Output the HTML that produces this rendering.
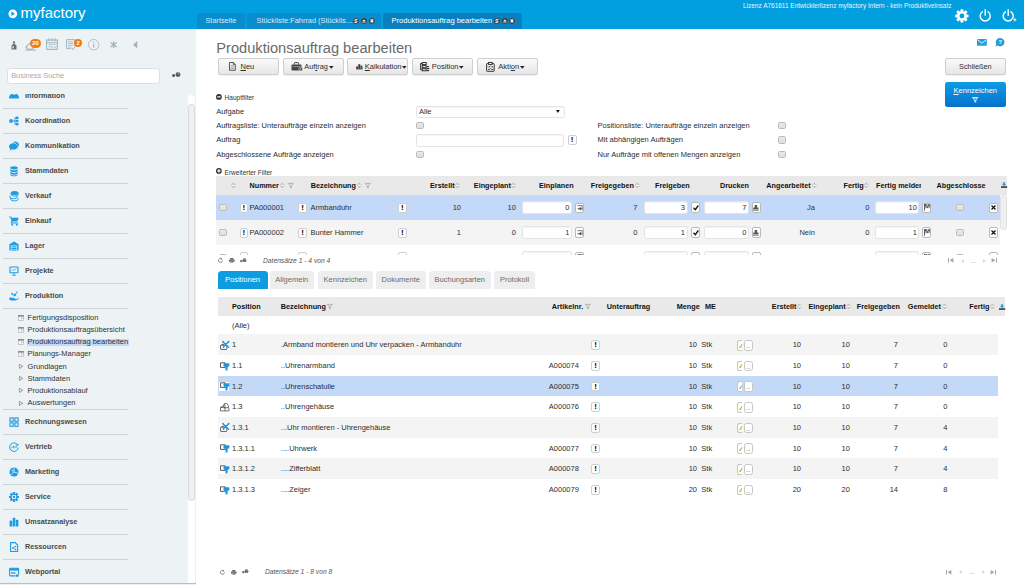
<!DOCTYPE html><html lang="de"><head><meta charset="utf-8"><title>myfactory - Produktionsauftrag bearbeiten</title><style>
*{box-sizing:border-box;margin:0;padding:0}
html,body{width:1024px;height:585px;overflow:hidden;background:#fff}
body{font-family:"Liberation Sans",Arial,sans-serif;font-size:7.5px;color:#2e2e2e;position:relative}
.t{position:absolute;white-space:nowrap;line-height:10px;height:10px}
.b{position:absolute}
.bd{font-weight:bold}
.h{font-weight:bold;font-size:7.25px;color:#111}
.it{font-style:italic;font-size:6.7px;color:#555}
svg{position:absolute;overflow:visible}
#hdr{position:absolute;left:0;top:0;width:1024px;height:29px;background:#019ee0}
#hline{position:absolute;left:196px;top:29px;width:828px;height:.6px;background:#a9dcf3}
#side{position:absolute;left:0;top:29px;width:196px;height:556px;background:#edf2f5}
.tab{position:absolute;top:13px;height:16px;background:#0b8ccd;border-radius:3px 3px 0 0}
.btn{position:absolute;border:1px solid #cfcfcf;border-radius:2px;background:linear-gradient(#fafafa,#e6e6e6);box-shadow:0 0.5px 0.5px rgba(0,0,0,.12)}
.inp{position:absolute;border:1px solid #e4e4e4;border-radius:2.5px;background:#fff;box-shadow:inset 0 0.5px 1px rgba(0,0,0,.08)}
.cb{position:absolute;width:7.3px;height:7.1px;margin-top:.3px;border:1px solid #bcbcbc;border-radius:1.6px;background:linear-gradient(#e9e9e9,#dfdfdf)}
.cbL{width:7.7px;height:7.6px;margin-top:0}
.sb{position:absolute;border:1px solid #b9b9b9;border-radius:2px;background:#fff}
.sep{position:absolute;left:3px;width:125px;height:1px;background:#ced3d6}
.mi{font-weight:bold;font-size:7.25px;color:#4a4a4a}
.sm{color:#333}
.tb2{position:absolute;top:271px;height:18px;border-radius:3.5px 3.5px 0 0;background:#eeeeee;color:#6c6c6c;text-align:center;line-height:18px;font-size:7.5px}
</style></head><body>
<div id="hdr"></div>
<svg style="left:8.2px;top:9.2px" width="9.6" height="9.6" viewBox="0 0 10 10"><circle cx="5" cy="5" r="4.6" fill="#fff"/><path d="M3.6 2.6 L7.2 5 L3.6 7.4Z" fill="#019ee0"/></svg>
<div class="t" style="left:20.5px;top:2px;font-size:15px;line-height:22px;height:22px;color:#fff">myfactory</div>
<div class="tab" style="left:196.5px;width:48.5px"></div>
<div class="tab" style="left:247px;width:134px"></div>
<div class="tab" style="left:383.3px;width:138.5px;background:#0a7fc0"></div>
<div class="t " style="top:16.20px;left:205.50px;color:#d6ecf8;font-size:7.3px">Startseite</div>
<div class="t " style="top:16.20px;left:256.50px;color:#d6ecf8;font-size:7.4px">Stückliste:Fahrrad (Stücklis...</div>
<div class="t " style="top:16.20px;left:391.60px;color:#fff;font-size:7.5px">Produktionsauftrag bearbeiten</div>
<svg style="left:353.10px;top:18.4px" width="5.8" height="5.8" viewBox="0 0 6 6"><circle cx="3" cy="3" r="3" fill="#3d4449"/><path d="M4.500 1.600H2.300a.8.800 0 0 0 0 1.500H3.700a.8.800 0 0 1 0 1.500H1.500" stroke="#fff" stroke-width="1" fill="none"/></svg><svg style="left:360.85px;top:18.4px" width="5.8" height="5.8" viewBox="0 0 6 6"><circle cx="3" cy="3" r="3" fill="#3d4449"/><path d="M1.300 3.300L3 1.500L4.700 3.300Z" fill="#fff"/><path d="M1.300 4.200h3.400" stroke="#fff" stroke-width=".8"/></svg><svg style="left:368.60px;top:18.4px" width="5.8" height="5.8" viewBox="0 0 6 6"><circle cx="3" cy="3" r="3" fill="#3d4449"/><path d="M1.700 1.500L4.300 4.500M4.300 1.500L1.700 4.500" stroke="#fff" stroke-width="1.300"/></svg>
<svg style="left:493.90px;top:18.4px" width="5.8" height="5.8" viewBox="0 0 6 6"><circle cx="3" cy="3" r="3" fill="#3d4449"/><path d="M4.500 1.600H2.300a.8.800 0 0 0 0 1.500H3.700a.8.800 0 0 1 0 1.500H1.500" stroke="#fff" stroke-width="1" fill="none"/></svg><svg style="left:501.65px;top:18.4px" width="5.8" height="5.8" viewBox="0 0 6 6"><circle cx="3" cy="3" r="3" fill="#3d4449"/><path d="M1.300 3.300L3 1.500L4.700 3.300Z" fill="#fff"/><path d="M1.300 4.200h3.400" stroke="#fff" stroke-width=".8"/></svg><svg style="left:509.40px;top:18.4px" width="5.8" height="5.8" viewBox="0 0 6 6"><circle cx="3" cy="3" r="3" fill="#3d4449"/><path d="M1.700 1.500L4.300 4.500M4.300 1.500L1.700 4.500" stroke="#fff" stroke-width="1.300"/></svg>
<div class="t " style="top:0.90px;left:743.00px;color:#eaf6fd;font-size:6.47px">Lizenz A761611 Entwicklerlizenz myfactory Intern - kein Produktiveinsatz</div>
<svg style="left:955.3px;top:8.6px" width="13.8" height="13.8" viewBox="-6.5 -6.5 13 13"><g fill="#fff"><circle r="4.4"/><rect x="-1.4" y="-6.3" width="2.8" height="3.4" rx=".5" transform="rotate(0)"/><rect x="-1.4" y="-6.3" width="2.8" height="3.4" rx=".5" transform="rotate(45)"/><rect x="-1.4" y="-6.3" width="2.8" height="3.4" rx=".5" transform="rotate(90)"/><rect x="-1.4" y="-6.3" width="2.8" height="3.4" rx=".5" transform="rotate(135)"/><rect x="-1.4" y="-6.3" width="2.8" height="3.4" rx=".5" transform="rotate(180)"/><rect x="-1.4" y="-6.3" width="2.8" height="3.4" rx=".5" transform="rotate(225)"/><rect x="-1.4" y="-6.3" width="2.8" height="3.4" rx=".5" transform="rotate(270)"/><rect x="-1.4" y="-6.3" width="2.8" height="3.4" rx=".5" transform="rotate(315)"/></g><circle r="2.3" fill="#019ee0"/></svg>
<svg style="left:979.3px;top:8.6px" width="12.4" height="12.8" viewBox="0 0 12 12.5"><path d="M3.3 2.7A4.9 4.9 0 1 0 8.7 2.7" fill="none" stroke="#fff" stroke-width="1.4" stroke-linecap="round"/><path d="M6 .8V6" stroke="#fff" stroke-width="1.4" stroke-linecap="round"/></svg>
<svg style="left:1002.2px;top:8.6px" width="15.5" height="13.4" viewBox="0 0 15 13"><path d="M3.3 2.7A4.9 4.9 0 1 0 8.7 2.7" fill="none" stroke="#fff" stroke-width="1.4" stroke-linecap="round"/><path d="M6 .8V6" stroke="#fff" stroke-width="1.4" stroke-linecap="round"/><path d="M12.4 8l.8 1.600 1.600.8-1.600.8-.8 1.600-.8-1.600-1.600-.8 1.600-.8z" fill="#fff" stroke="#019ee0" stroke-width=".5"/></svg>
<div id="side"></div>
<svg style="left:10.50px;top:40.50px" width="6" height="9" viewBox="0 0 6 9"><g fill="#666b6f"><circle cx="3" cy="1.300" r="1.150"/><path d="M1.600 2.800h2.800v1.400h1.100V8.600H.5V4.200h1.100z"/><rect x="1.500" y="5.200" width="1.300" height="2.200" fill="#edf2f5"/></g></svg>
<svg style="left:24.50px;top:40.50px" width="12" height="9.5" viewBox="0 0 12 9.5"><g fill="none" stroke="#9db5c1" stroke-width="1.100"><path d="M6.500.8L.9 6l2.400 2.400h3.200l3.200-3"/><path d="M.5 9h10.500"/></g></svg>
<div class="b" style="left:30.2px;top:38.6px;width:10.4px;height:9px;border-radius:4.5px;background:#f57c0a;color:#fff;font-weight:bold;font-size:5.8px;line-height:9px;text-align:center">20</div>
<svg style="left:45.60px;top:38.00px" width="12" height="12" viewBox="0 0 12 12"><g fill="none" stroke="#9db5c1" stroke-width="1.050"><rect x=".6" y="2" width="10.800" height="9.400"/><path d="M.6 4.800h10.800M3 .3v3M6 .3v3M9 .3v3"/><path d="M2.800 6.600h1.400M5.300 6.600h1.400M7.800 6.600h1.400M2.800 8.800h1.400M5.300 8.800h1.400" stroke-width="1.200"/><path d="M7.600 9.200l1 1 1.900-2.200" stroke-width=".8"/></g></svg>
<svg style="left:66.40px;top:38.60px" width="10" height="11.5" viewBox="0 0 10 11.5"><g fill="none" stroke="#9db5c1" stroke-width="1"><path d="M8.800 6.500V.6H.6v9h4.200"/><path d="M2.200 2.700h5M2.200 4.500h5M2.200 6.300h5M2.200 8h2.500" stroke-width=".8"/><path d="M5.400 8.600l1.500 2 2.400-3.200" stroke-width="1"/></g></svg>
<div class="b" style="left:74.3px;top:38.6px;width:7.7px;height:8.6px;border-radius:4.3px;background:#f57c0a;color:#fff;font-weight:bold;font-size:5.8px;line-height:8.6px;text-align:center">2</div>
<svg style="left:87.50px;top:39.00px" width="11.4" height="11.4" viewBox="0 0 11.4 11.4"><g fill="none" stroke="#9db5c1"><circle cx="5.700" cy="5.700" r="5.200" stroke-width=".8"/><path d="M5.700 4.800v3.600" stroke-width="1.100"/><circle cx="5.700" cy="3.100" r=".7" fill="#9db5c1" stroke="none"/></g></svg>
<svg style="left:109.50px;top:41.00px" width="7.4" height="7.6" viewBox="0 0 7.4 7.6"><g stroke="#9db5c1" stroke-width="1.300" fill="none"><path d="M3.700 .3v7M.7 1.600l6 4.400M6.700 1.600L.7 6"/></g></svg>
<svg style="left:132.70px;top:41.00px" width="4.3" height="7.6" viewBox="0 0 4.3 7.6"><path d="M4.300 0v7.600L0 3.800z" fill="#9db5c1"/></svg>
<div class="b" style="left:7.3px;top:68.3px;width:153.2px;height:15.3px;background:#fff;border:1px solid #dcdfe1;border-radius:3.5px"></div>
<div class="t " style="top:71.00px;left:11.20px;color:#a9a9a9;font-size:7.4px">Business Suche</div>
<svg style="left:171.70px;top:71.70px" width="8.5" height="5.5" viewBox="0 0 8.5 5.5"><circle cx="1.600" cy="3.600" r="1.500" fill="#555"/><circle cx="6" cy="2.600" r="2.400" fill="#555"/><circle cx="6.500" cy="2" r=".9" fill="#999"/></svg>
<div class="b" style="left:0;top:94.2px;width:186px;height:490.8px;overflow:hidden"><div style="position:absolute;left:0;top:-94.2px;width:186px;height:585px">
<svg style="left:9.00px;top:89.20px" width="10" height="10" viewBox="0 0 10 10"><g fill="#1f9be1"><circle cx="3" cy="2.6" r="1.7"/><circle cx="7.2" cy="2.6" r="1.7"/><path d="M0 9.5c0-3 1.5-4.5 3-4.5s2.2 1 2.2 1S6 5 7.2 5c1.7 0 2.8 1.500 2.800 4.500z"/></g></svg>
<div class="t mi" style="top:90.50px;left:25.00px;">Information</div>
<svg style="left:9.00px;top:115.50px" width="10" height="10" viewBox="0 0 10 10"><g fill="#1f9be1"><circle cx="2" cy="5" r="1.9"/><rect x="6.600" y=".6" width="2.800" height="2.400"/><rect x="6.600" y="3.800" width="2.800" height="2.400"/><rect x="6.600" y="7" width="2.800" height="2.400"/><path d="M3.500 4.600h2v-3h1.300v.8h-.5v2.200h.5v.8h-.5v2.200h.5v.8H5.500v-3h-2z"/></g></svg>
<div class="t mi" style="top:115.50px;left:25.00px;">Koordination</div>
<svg style="left:9.00px;top:140.50px" width="10" height="10" viewBox="0 0 10 10"><g fill="#1f9be1"><path d="M4.300 2.200c2.400 0 4.300 1.400 4.300 3.200s-1.900 3.200-4.300 3.200c-.6 0-1.100-.1-1.600-.2L.6 9.600l.7-1.900C.5 7.100 0 6.300 0 5.400c0-1.800 1.900-3.200 4.300-3.200z"/><path d="M5.700.6c2.400 0 4.300 1.400 4.300 3.200 0 .9-.5 1.700-1.300 2.300l.5 1.500-1-.6c.3-.5.500-1 .5-1.600 0-2.100-2.100-3.700-4.700-3.800.6-.6 1.100-1 1.700-1z"/></g></svg>
<div class="t mi" style="top:140.50px;left:25.00px;">Kommunikation</div>
<svg style="left:9.00px;top:165.50px" width="10" height="10" viewBox="0 0 10 10"><g fill="#1f9be1"><ellipse cx="5" cy="1.800" rx="3.800" ry="1.600"/><path d="M1.200 2.900c.5 1 2.100 1.400 3.800 1.400s3.300-.4 3.800-1.400v1.600c0 .9-1.700 1.600-3.800 1.600S1.200 5.400 1.200 4.500z"/><path d="M1.200 5.500c.5 1 2.100 1.400 3.800 1.400s3.300-.4 3.800-1.400v1.600c0 .9-1.700 1.600-3.800 1.600S1.200 8 1.200 7.100z"/><path d="M1.200 8.100c.5 1 2.100 1.400 3.800 1.400s3.300-.4 3.800-1.400v.6c0 .9-1.700 1.500-3.800 1.500s-3.800-.6-3.800-1.500z"/></g></svg>
<div class="t mi" style="top:165.50px;left:25.00px;">Stammdaten</div>
<svg style="left:9.00px;top:190.50px" width="10" height="10" viewBox="0 0 10 10"><g fill="none" stroke="#1f9be1" stroke-width="1"><ellipse cx="5.600" cy="2" rx="3.600" ry="1.500" fill="#1f9be1"/><path d="M2 2.200v1.300c0 .8 1.600 1.500 3.600 1.500s3.600-.7 3.600-1.500V2.200"/><path d="M.9 4.800v1.300c0 .8 1.600 1.500 3.600 1.500s3.600-.7 3.600-1.500V4.800"/><path d="M1.800 7.200v1.200c0 .8 1.600 1.500 3.600 1.500S9 9.200 9 8.400V7.200"/></g></svg>
<div class="t mi" style="top:190.50px;left:25.00px;">Verkauf</div>
<svg style="left:9.00px;top:215.50px" width="10" height="10" viewBox="0 0 10 10"><g fill="#1f9be1"><path d="M.3.600h1.800l.5 1.100h7.100l-1.500 3.900H3.600l-.5.900h6v1H2.500c-.7 0-1-.6-.7-1.100l.8-1.400L1.400 1.600H.3z"/><circle cx="3.200" cy="8.800" r="1"/><circle cx="7.800" cy="8.800" r="1"/></g></svg>
<div class="t mi" style="top:215.50px;left:25.00px;">Einkauf</div>
<svg style="left:9.00px;top:240.50px" width="10" height="10" viewBox="0 0 10 10"><g fill="#1f9be1"><path d="M5 .6L.4 3.200V9.600h1.400V4.600h6.400v5h1.400V3.200z"/><rect x="2.400" y="5.300" width="5.200" height="1.100"/><rect x="2.400" y="6.900" width="5.200" height="1.100"/><rect x="2.400" y="8.500" width="5.200" height="1.100"/></g></svg>
<div class="t mi" style="top:240.50px;left:25.00px;">Lager</div>
<svg style="left:9.00px;top:265.50px" width="10" height="10" viewBox="0 0 10 10"><g fill="none" stroke="#1f9be1"><rect x="1" y="1" width="8" height="5.800" rx=".6" stroke-width="1.100"/><path d="M2.600 5l1.600-1.600 1.200 1L7.400 2.500" stroke-width=".7"/><path d="M5 6.800v1.800M3.200 9.200h3.600" stroke-width="1"/></g></svg>
<div class="t mi" style="top:265.50px;left:25.00px;">Projekte</div>
<svg style="left:9.00px;top:290.50px" width="10" height="10" viewBox="0 0 10 10"><g fill="#1f9be1"><path d="M.4 6.500h1.800l2.200.5c.9.100 1.700.3 1.700.9h1.600l1.600-.7c.5-.2.800.3.400.7L6.500 9.600H2.300L.4 8.800z"/><path d="M4.600 5.600c0-2 .3-3 2.800-3.400.1 1.800-.8 2.900-2.200 3z"/><path d="M4.600 4.300C4.600 2.800 4 2 2.300 1.700c-.1 1.300.6 2.300 1.700 2.500z"/><circle cx="7.800" cy="1.300" r=".8"/></g></svg>
<div class="t mi" style="top:290.50px;left:25.00px;">Produktion</div>
<svg style="left:9.00px;top:417.10px" width="10" height="10" viewBox="0 0 10 10"><g fill="none" stroke="#1f9be1" stroke-width="1.100"><rect x="1" y=".9" width="3.200" height="3.400"/><rect x="5.900" y=".9" width="3.200" height="3.400"/><rect x="1" y="5.900" width="3.200" height="3.400"/><rect x="5.900" y="5.900" width="3.200" height="3.400"/></g></svg>
<div class="t mi" style="top:417.10px;left:25.00px;">Rechnungswesen</div>
<svg style="left:9.00px;top:442.10px" width="10" height="10" viewBox="0 0 10 10"><g fill="none" stroke="#1f9be1"><path d="M8.900 3.300A4.300 4.300 0 1 0 9.300 5.600" stroke-width="1"/><path d="M3 6.200V4.800M4.400 6.200V3.600M5.800 6.200V4.400M7.200 6.200V3" stroke-width=".8"/><path d="M9.600 1.600l-.5 2.200-2-.8z" fill="#1f9be1" stroke="none"/></g></svg>
<div class="t mi" style="top:442.10px;left:25.00px;">Vertrieb</div>
<svg style="left:9.00px;top:467.10px" width="10" height="10" viewBox="0 0 10 10"><g><circle cx="5" cy="5" r="4.500" fill="#1f9be1"/><path d="M5 5V.5M5 5l4.300 1.400M5 5L1.600 8" stroke="#edf2f5" stroke-width=".8" fill="none"/><circle cx="3.400" cy="3.600" r="1.100" fill="#edf2f5" opacity=".6"/></g></svg>
<div class="t mi" style="top:467.10px;left:25.00px;">Marketing</div>
<svg style="left:9.00px;top:492.00px" width="10" height="10" viewBox="0 0 10 10"><g fill="#1f9be1"><rect x="-1.100" y="-5" width="2.200" height="2.600" rx=".4" transform="translate(5 5) rotate(0)"/><rect x="-1.100" y="-5" width="2.200" height="2.600" rx=".4" transform="translate(5 5) rotate(45)"/><rect x="-1.100" y="-5" width="2.200" height="2.600" rx=".4" transform="translate(5 5) rotate(90)"/><rect x="-1.100" y="-5" width="2.200" height="2.600" rx=".4" transform="translate(5 5) rotate(135)"/><rect x="-1.100" y="-5" width="2.200" height="2.600" rx=".4" transform="translate(5 5) rotate(180)"/><rect x="-1.100" y="-5" width="2.200" height="2.600" rx=".4" transform="translate(5 5) rotate(225)"/><rect x="-1.100" y="-5" width="2.200" height="2.600" rx=".4" transform="translate(5 5) rotate(270)"/><rect x="-1.100" y="-5" width="2.200" height="2.600" rx=".4" transform="translate(5 5) rotate(315)"/><circle cx="5" cy="5" r="3.500"/><circle cx="5" cy="5" r="2.300" fill="#edf2f5"/><circle cx="5" cy="5" r="1.200"/></g></svg>
<div class="t mi" style="top:492.00px;left:25.00px;">Service</div>
<svg style="left:9.00px;top:517.00px" width="10" height="10" viewBox="0 0 10 10"><g fill="#1f9be1"><rect x=".6" y="3.600" width="2.600" height="5.900"/><rect x="3.700" y=".8" width="2.600" height="8.700"/><rect x="6.800" y="2.800" width="2.600" height="6.700"/></g></svg>
<div class="t mi" style="top:517.00px;left:25.00px;">Umsatzanalyse</div>
<svg style="left:9.00px;top:542.00px" width="10" height="10" viewBox="0 0 10 10"><g fill="none" stroke="#1f9be1"><path d="M1.600.6h4.600l2.400 2.400v6.500H1.600z" stroke-width="1.100"/><path d="M6.400 4.600L3.800 6l2.600 1.500" stroke-width=".7"/><circle cx="6.500" cy="4.500" r=".8" fill="#1f9be1" stroke="none"/><circle cx="3.700" cy="6" r=".8" fill="#1f9be1" stroke="none"/><circle cx="6.500" cy="7.600" r=".8" fill="#1f9be1" stroke="none"/></g></svg>
<div class="t mi" style="top:542.00px;left:25.00px;">Ressourcen</div>
<svg style="left:9.00px;top:567.10px" width="10" height="10" viewBox="0 0 10 10"><g><rect x=".6" y="1.300" width="9" height="7.600" rx=".8" fill="none" stroke="#1f9be1" stroke-width="1.100"/><rect x=".6" y="1.300" width="9" height="2.300" fill="#1f9be1"/><rect x="2" y="5.300" width="4.500" height="1.300" fill="#1f9be1"/><circle cx="8.200" cy="8.600" r="1.700" fill="#1f9be1" stroke="#edf2f5" stroke-width=".5"/></g></svg>
<div class="t mi" style="top:567.10px;left:25.00px;">Webportal</div>
<div class="sep" style="top:107.9px"></div>
<div class="sep" style="top:132.8px"></div>
<div class="sep" style="top:157.9px"></div>
<div class="sep" style="top:182.9px"></div>
<div class="sep" style="top:207.9px"></div>
<div class="sep" style="top:232.9px"></div>
<div class="sep" style="top:257.9px"></div>
<div class="sep" style="top:282.9px"></div>
<div class="sep" style="top:307.9px"></div>
<div class="sep" style="top:409.0px"></div>
<div class="sep" style="top:434.0px"></div>
<div class="sep" style="top:458.9px"></div>
<div class="sep" style="top:483.9px"></div>
<div class="sep" style="top:508.9px"></div>
<div class="sep" style="top:533.8px"></div>
<div class="sep" style="top:558.8px"></div>
<div class="b" style="left:27px;top:338.6px;width:101.5px;height:7.4px;background:#c3d9f8"></div>
<svg style="left:18.20px;top:314.90px" width="6" height="5.8" viewBox="0 0 6 5.8"><rect x=".4" y=".6" width="5.200" height="4.800" fill="#f6f7f8" stroke="#a4a7a9" stroke-width=".6"/><path d="M.3 1h5.400" stroke="#4a4a4a" stroke-width=".9"/><rect x="3.300" y="2.700" width=".9" height=".9" fill="#555"/></svg>
<div class="t sm" style="top:312.80px;left:27.60px;">Fertigungsdisposition</div>
<svg style="left:18.20px;top:327.10px" width="6" height="5.8" viewBox="0 0 6 5.8"><rect x=".4" y=".6" width="5.200" height="4.800" fill="#f6f7f8" stroke="#a4a7a9" stroke-width=".6"/><path d="M.3 1h5.400" stroke="#4a4a4a" stroke-width=".9"/><rect x="3.300" y="2.700" width=".9" height=".9" fill="#555"/></svg>
<div class="t sm" style="top:325.00px;left:27.60px;">Produktionsauftragsübersicht</div>
<svg style="left:18.20px;top:339.30px" width="6" height="5.8" viewBox="0 0 6 5.8"><rect x=".4" y=".6" width="5.200" height="4.800" fill="#f6f7f8" stroke="#a4a7a9" stroke-width=".6"/><path d="M.3 1h5.400" stroke="#4a4a4a" stroke-width=".9"/><rect x="3.300" y="2.700" width=".9" height=".9" fill="#555"/></svg>
<div class="t sm" style="top:337.20px;left:27.60px;">Produktionsauftrag bearbeiten</div>
<svg style="left:18.20px;top:351.40px" width="6" height="5.8" viewBox="0 0 6 5.8"><rect x=".4" y=".6" width="5.200" height="4.800" fill="#f6f7f8" stroke="#a4a7a9" stroke-width=".6"/><path d="M.3 1h5.400" stroke="#4a4a4a" stroke-width=".9"/><rect x="3.300" y="2.700" width=".9" height=".9" fill="#555"/></svg>
<div class="t sm" style="top:349.30px;left:27.60px;">Planungs-Manager</div>
<svg style="left:19.20px;top:364.10px" width="4.2" height="4.8" viewBox="0 0 4.2 4.8"><path d="M.4.400L3.800 2.400L.4 4.400z" fill="none" stroke="#666" stroke-width=".6"/></svg>
<div class="t sm" style="top:361.50px;left:27.60px;">Grundlagen</div>
<svg style="left:19.20px;top:376.20px" width="4.2" height="4.8" viewBox="0 0 4.2 4.8"><path d="M.4.400L3.800 2.400L.4 4.400z" fill="none" stroke="#666" stroke-width=".6"/></svg>
<div class="t sm" style="top:373.60px;left:27.60px;">Stammdaten</div>
<svg style="left:19.20px;top:388.40px" width="4.2" height="4.8" viewBox="0 0 4.2 4.8"><path d="M.4.400L3.800 2.400L.4 4.400z" fill="none" stroke="#666" stroke-width=".6"/></svg>
<div class="t sm" style="top:385.80px;left:27.60px;">Produktionsablauf</div>
<svg style="left:19.20px;top:400.60px" width="4.2" height="4.8" viewBox="0 0 4.2 4.8"><path d="M.4.400L3.800 2.400L.4 4.400z" fill="none" stroke="#666" stroke-width=".6"/></svg>
<div class="t sm" style="top:398.00px;left:27.60px;">Auswertungen</div>
</div></div>
<div class="b" style="left:187.9px;top:94.8px;width:7.3px;height:489px;background:#fff;border-radius:3.6px 3.6px 0 0"></div>
<div class="b" style="left:188.2px;top:103.5px;width:6.8px;height:397px;background:#f0f0f0;border:1px solid #d8d9da;border-radius:3.4px"></div>
<div class="b" style="left:0;top:583.3px;width:196px;height:1px;background:#b9bdc0"></div>
<div id="main">
<div class="t" style="left:216.3px;top:38.5px;font-size:14.63px;line-height:18px;height:18px;color:#6a6a6a">Produktionsauftrag bearbeiten</div>
<svg style="left:977.30px;top:39.30px" width="9.6" height="6.8" viewBox="0 0 9.6 6.8"><rect width="9.800" height="6.800" rx=".6" fill="#1f9fe2"/><path d="M.6.800l4.300 3.400L9.200.8" stroke="#fff" stroke-width=".9" fill="none"/></svg>
<svg style="left:995.00px;top:38.20px" width="9.6" height="8.8" viewBox="0 0 9.6 8.8"><path d="M5.200 0a4.300 4.100 0 1 1-2.600 7.400L.3 8.500l1-2.300A4.100 4.100 0 0 1 5.200 0z" fill="#1f9be1"/><text x="5.300" y="6.200" font-size="5.600" font-weight="bold" fill="#fff" text-anchor="middle" font-family="Liberation Sans, sans-serif">?</text></svg>
<div class="btn" style="left:218px;top:58px;width:61px;height:17px"></div>
<div class="btn" style="left:282.8px;top:58px;width:61px;height:17px"></div>
<div class="btn" style="left:347px;top:58px;width:61px;height:17px"></div>
<div class="btn" style="left:412px;top:58px;width:61px;height:17px"></div>
<div class="btn" style="left:476.5px;top:58px;width:61px;height:17px"></div>
<div class="btn" style="left:945px;top:58px;width:60.6px;height:17px"></div>
<div class="t " style="top:61.50px;left:875.30px;width:200px;text-align:center;font-size:7.3px">Schließen</div>
<div class="b" style="left:945px;top:82.200px;width:60.600px;height:24.600px;border-radius:2.500px;background:linear-gradient(#0c9de5,#0672cd)"></div>
<div class="t " style="top:85.70px;left:875.30px;width:200px;text-align:center;color:#fff;font-size:7.5px"><u>K</u>ennzeichen</div>
<svg style="left:972.40px;top:97.20px" width="6.4" height="5.6" viewBox="0 0 6.4 5.6"><path d="M.4.500h5.600L3.800 3V5.300L2.600 4.600V3z" fill="none" stroke="#fff" stroke-width=".8"/><path d="M1.500 1.600h3.400" stroke="#fff" stroke-width=".5"/></svg>
<svg style="left:229.30px;top:62.20px" width="6.8" height="8.8" viewBox="0 0 6.8 8.8"><path d="M.5.500h3.800l2 2v5.800H.5z" fill="#eee" stroke="#444" stroke-width=".9"/><path d="M4.300.5v2h2" fill="none" stroke="#444" stroke-width=".7"/><path d="M1.700 3.700h3.200M1.700 5.100h3.200M1.700 6.500h3.200" stroke="#777" stroke-width=".55"/></svg>
<div class="t " style="top:61.50px;left:240.50px;"><u>N</u>eu</div>
<svg style="left:291.00px;top:62.00px" width="12.4" height="9" viewBox="0 0 12.4 9"><path d="M3.400 2.600V1.400q0-.8.800-.8h2.600q.8 0 .8.800v1.200" fill="none" stroke="#3a3a3a" stroke-width="1"/><path d="M.5 3.300q0-.8.800-.8h8.400q.8 0 .8.800v4.300q0 .8-.8.800H1.300q-.8 0-.8-.8z" fill="#444"/><path d="M1.400 4.600h7.800" stroke="#bbb" stroke-width=".6"/><circle cx="9.800" cy="7" r="2" fill="#333" stroke="#f0f0f0" stroke-width=".6"/><circle cx="9.800" cy="7" r=".7" fill="#eee"/></svg>
<div class="t " style="top:61.50px;left:304.30px;font-size:7.3px">Auf<u>t</u>rag</div>
<svg style="left:329.30px;top:65.60px" width="4.6" height="2.8" viewBox="0 0 4.6 2.8"><path d="M0 0h4.600L2.300 2.800z" fill="#222"/></svg>
<svg style="left:355.50px;top:63.80px" width="6.6" height="5.4" viewBox="0 0 6.6 5.4"><g fill="#3a3a3a"><rect x=".2" y="2.400" width="1.800" height="2.400"/><rect x="2.300" y=".2" width="2" height="4.600"/><rect x="4.600" y="1.600" width="1.800" height="3.200"/><rect x="0" y="4.600" width="6.600" height=".8"/></g></svg>
<div class="t " style="top:61.50px;left:364.80px;"><u>K</u>alkulation</div>
<svg style="left:402.00px;top:65.60px" width="4.6" height="2.8" viewBox="0 0 4.6 2.8"><path d="M0 0h4.600L2.300 2.800z" fill="#222"/></svg>
<svg style="left:420.00px;top:62.00px" width="9.4" height="9.4" viewBox="0 0 9.4 9.4"><g fill="none" stroke="#2a2a2a" stroke-width=".95"><rect x="2.200" y=".5" width="4" height="2.100"/><rect x="2.200" y="3.600" width="4" height="2.100"/><rect x="2.200" y="6.700" width="4" height="2.100"/><path d="M2.200 1.500H.6v6.200h1.600"/></g><g fill="#333"><rect x="6.800" y="4" width="2.200" height="1.200"/><rect x="6.800" y="6" width="2.600" height="1.200"/><rect x="6.800" y="8" width="2.200" height="1.200"/></g></svg>
<div class="t " style="top:61.50px;left:431.80px;">Position</div>
<svg style="left:459.20px;top:65.60px" width="4.6" height="2.8" viewBox="0 0 4.6 2.8"><path d="M0 0h4.600L2.300 2.800z" fill="#222"/></svg>
<svg style="left:486.30px;top:61.80px" width="8.8" height="9.8" viewBox="0 0 8.8 9.8"><g fill="none" stroke="#2a2a2a" stroke-width=".95"><rect x=".6" y="1.500" width="7.600" height="7.800" rx=".6"/><rect x="2.600" y=".4" width="3.600" height="2" fill="#fff"/></g><path d="M2 4.400l1 1 1.500-1.800M2 7l1 1 1.500-1.800" stroke="#2a2a2a" stroke-width=".8" fill="none"/><path d="M5.300 4.800h1.800M5.300 7.400h1.800" stroke="#2a2a2a" stroke-width=".9"/></svg>
<div class="t " style="top:61.50px;left:498.30px;">Akti<u>o</u>n</div>
<svg style="left:520.20px;top:65.60px" width="4.6" height="2.8" viewBox="0 0 4.6 2.8"><path d="M0 0h4.600L2.300 2.800z" fill="#222"/></svg>
<svg style="left:216.30px;top:93.70px" width="5.8" height="5.8" viewBox="0 0 5.8 5.8"><circle cx="2.900" cy="2.900" r="2.900" fill="#333"/><rect x="1.200" y="2.300" width="3.400" height="1.200" fill="#fff"/></svg>
<div class="t " style="top:93.00px;left:224.60px;font-size:6.5px;color:#333">Hauptfilter</div>
<svg style="left:216.30px;top:168.40px" width="5.8" height="5.8" viewBox="0 0 5.8 5.8"><circle cx="2.900" cy="2.900" r="2.900" fill="#333"/><rect x="1.200" y="2.300" width="3.400" height="1.200" fill="#fff"/><rect x="2.300" y="1.200" width="1.200" height="3.400" fill="#fff"/></svg>
<div class="t " style="top:167.60px;left:224.60px;font-size:6.5px;color:#333">Erweiterter Filter</div>
<div class="t " style="top:106.50px;left:216.20px;">Aufgabe</div>
<div class="t " style="top:120.80px;left:216.20px;">Auftragsliste: Unteraufträge einzeln anzeigen</div>
<div class="t " style="top:134.90px;left:216.20px;">Auftrag</div>
<div class="t " style="top:149.50px;left:216.20px;">Abgeschlossene Aufträge anzeigen</div>
<div class="t " style="top:120.80px;left:597.50px;">Positionsliste: Unteraufträge einzeln anzeigen</div>
<div class="cb cbL" style="left:778.3px;top:121.90px"></div>
<div class="t " style="top:134.90px;left:597.50px;">Mit abhängigen Aufträgen</div>
<div class="cb cbL" style="left:778.3px;top:136.00px"></div>
<div class="t " style="top:149.50px;left:597.50px;">Nur Aufträge mit offenen Mengen anzeigen</div>
<div class="cb cbL" style="left:778.3px;top:150.60px"></div>
<div class="inp" style="left:415.5px;top:105.500px;width:149px;height:12.400px"></div>
<div class="t " style="top:106.60px;left:419.00px;">Alle</div>
<svg style="left:556.30px;top:110.20px" width="3.8" height="3" viewBox="0 0 3.8 3"><path d="M0 0h3.800L1.900 3z" fill="#111"/></svg>
<div class="cb cbL" style="left:416.1px;top:121.9px"></div>
<div class="inp" style="left:415.5px;top:134.200px;width:148.200px;height:12.400px"></div>
<div class="sb" style="left:567.60px;top:134.90px;width:9px;height:10.4px;border-color:#cfcfcf"><div style="position:absolute;left:0;width:100%;top:0;height:100%;text-align:center;font-weight:bold;font-size:8px;line-height:8.2px;color:#000">!</div></div>
<div class="cb cbL" style="left:416.1px;top:150.600px"></div>
<div class="b" style="left:216px;top:176px;width:791.300px;height:19.300px;background:#e9e9e9"></div>
<div class="b" style="left:216px;top:195.300px;width:784.300px;height:24.800px;background:#c4d9f8"></div>
<div class="b" style="left:216px;top:220.100px;width:784.300px;height:24.900px;background:#f4f4f4"></div>
<svg style="left:230.90px;top:181.50px" width="4.8" height="6.8" viewBox="0 0 4.8 6.8"><path d="M4.700 2.300H2.300V.9L.4 3.400l1.900 2.500V4.500h2.400" fill="#f6f6f6" stroke="#a2a2a2" stroke-width=".6"/></svg>
<div class="t h" style="top:180.60px;left:249.50px;">Nummer</div>
<svg style="left:280.20px;top:181.50px" width="4.8" height="6.8" viewBox="0 0 4.8 6.8"><path d="M4.700 2.300H2.300V.9L.4 3.400l1.900 2.500V4.500h2.400" fill="#f6f6f6" stroke="#a2a2a2" stroke-width=".6"/></svg>
<svg style="left:287.50px;top:183.00px" width="5.6" height="5.4" viewBox="0 0 5.6 5.4"><path d="M.3.400h5L3.300 2.800V5L2.300 4.400V2.800z" fill="none" stroke="#888" stroke-width=".55"/></svg>
<div class="t h" style="top:180.60px;left:310.80px;">Bezeichnung</div>
<svg style="left:356.70px;top:181.50px" width="4.8" height="6.8" viewBox="0 0 4.8 6.8"><path d="M4.700 2.300H2.300V.9L.4 3.400l1.900 2.500V4.500h2.400" fill="#f6f6f6" stroke="#a2a2a2" stroke-width=".6"/></svg>
<svg style="left:364.50px;top:183.00px" width="5.6" height="5.4" viewBox="0 0 5.6 5.4"><path d="M.3.400h5L3.300 2.800V5L2.300 4.400V2.800z" fill="none" stroke="#888" stroke-width=".55"/></svg>
<div class="t h" style="top:180.60px;left:430.00px;">Erstellt</div>
<svg style="left:455.20px;top:181.50px" width="4.8" height="6.8" viewBox="0 0 4.8 6.8"><path d="M4.700 2.300H2.300V.9L.4 3.400l1.900 2.500V4.500h2.400" fill="#f6f6f6" stroke="#a2a2a2" stroke-width=".6"/></svg>
<div class="t h" style="top:180.60px;left:473.80px;">Eingeplant</div>
<svg style="left:511.20px;top:181.50px" width="4.8" height="6.8" viewBox="0 0 4.8 6.8"><path d="M4.700 2.300H2.300V.9L.4 3.400l1.900 2.500V4.500h2.400" fill="#f6f6f6" stroke="#a2a2a2" stroke-width=".6"/></svg>
<div class="t h" style="top:180.60px;left:539.00px;">Einplanen</div>
<div class="t h" style="top:180.60px;left:590.80px;">Freigegeben</div>
<svg style="left:634.70px;top:181.50px" width="4.8" height="6.8" viewBox="0 0 4.8 6.8"><path d="M4.700 2.300H2.300V.9L.4 3.400l1.900 2.500V4.500h2.400" fill="#f6f6f6" stroke="#a2a2a2" stroke-width=".6"/></svg>
<div class="t h" style="top:180.60px;left:655.00px;">Freigeben</div>
<div class="t h" style="top:180.60px;left:720.00px;">Drucken</div>
<div class="t h" style="top:180.60px;left:766.30px;">Angearbeitet</div>
<svg style="left:812.00px;top:181.50px" width="4.8" height="6.8" viewBox="0 0 4.8 6.8"><path d="M4.700 2.300H2.300V.9L.4 3.400l1.900 2.500V4.500h2.400" fill="#f6f6f6" stroke="#a2a2a2" stroke-width=".6"/></svg>
<div class="t h" style="top:180.60px;left:843.50px;">Fertig</div>
<svg style="left:864.20px;top:181.50px" width="4.8" height="6.8" viewBox="0 0 4.8 6.8"><path d="M4.700 2.300H2.300V.9L.4 3.400l1.900 2.500V4.500h2.400" fill="#f6f6f6" stroke="#a2a2a2" stroke-width=".6"/></svg>
<div class="b" style="left:876px;top:180px;width:44.700px;height:11px;overflow:hidden"><div class="t h" style="left:0;top:.6px">Fertig melden</div></div>
<div class="t h" style="top:180.60px;left:936.50px;">Abgeschlosse</div>
<svg style="left:1000.80px;top:182.40px" width="6.2" height="6" viewBox="0 0 6.2 6"><rect x=".2" y="0" width="5.800" height="4" fill="#dfe3e6"/><path d="M2.300.3h1.600v1.800h1.100L3.100 4 1.200 2.100h1.100z" fill="#1f8fd8"/><rect x="0" y="4.300" width="6.200" height="1.500" fill="#2b2b2b"/></svg>
<div class="b" style="left:216px;top:176px;width:792px;height:78.600px;overflow:hidden"><div style="position:absolute;left:-216px;top:-176px;width:1024px;height:585px">
<div class="cb" style="left:219.300px;top:203.90px"></div>
<div class="sb" style="left:239.50px;top:202.60px;width:8.6px;height:10px;border-color:#cfcfcf"><div style="position:absolute;left:0;width:100%;top:0;height:100%;text-align:center;font-weight:bold;font-size:8px;line-height:7.8px;color:#000">!</div></div>
<div class="t " style="top:202.60px;left:249.50px;">PA000001</div>
<div class="sb" style="left:298.20px;top:202.60px;width:8.6px;height:10px;border-color:#cfcfcf"><div style="position:absolute;left:0;width:100%;top:0;height:100%;text-align:center;font-weight:bold;font-size:8px;line-height:7.8px;color:#000">!</div></div>
<div class="t " style="top:202.60px;left:310.50px;">Armbanduhr</div>
<div class="sb" style="left:398.00px;top:202.60px;width:8.6px;height:10px;border-color:#cfcfcf"><div style="position:absolute;left:0;width:100%;top:0;height:100%;text-align:center;font-weight:bold;font-size:8px;line-height:7.8px;color:#000">!</div></div>
<div class="t " style="top:202.60px;right:563.00px;">10</div>
<div class="t " style="top:202.60px;right:508.20px;">10</div>
<div class="inp" style="left:521.5px;top:201.30px;width:50.600px;height:12.500px"></div>
<div class="t " style="top:202.90px;right:454.50px;">0</div>
<div class="sb" style="left:575px;top:202.50px;width:8.600px;height:10.300px"></div>
<svg style="left:576.60px;top:204.60px" width="6" height="6" viewBox="0 0 6 6"><path d="M.4.600h4.800v4.800" fill="none" stroke="#444" stroke-width=".7"/><path d="M.6 3.200h2.200V1.800L5 3.700 2.800 5.600V4.300H.6z" fill="#444"/></svg>
<div class="t " style="top:202.60px;right:386.50px;">7</div>
<div class="inp" style="left:643.5px;top:201.30px;width:44.400px;height:12.500px"></div>
<div class="t " style="top:202.90px;right:339.00px;">3</div>
<div class="sb" style="left:690.700px;top:202.30px;width:9.300px;height:10.700px"></div>
<svg style="left:692.50px;top:204.80px" width="5.8" height="5.4" viewBox="0 0 5.8 5.4"><path d="M.5 2.800l1.800 1.900L5.300.5" fill="none" stroke="#111" stroke-width="1.300"/></svg>
<div class="inp" style="left:704.200px;top:201.30px;width:44.600px;height:12.500px"></div>
<div class="t " style="top:202.90px;right:277.70px;">7</div>
<div class="sb" style="left:751.500px;top:202.30px;width:9.300px;height:10.700px"></div>
<svg style="left:753.20px;top:205.00px" width="5.8" height="5.6" viewBox="0 0 5.8 5.6"><g fill="#555"><rect x="1.700" y="0" width="2.400" height="3"/><rect x=".2" y="2.600" width="5.400" height="1.700"/><rect x="0" y="4.800" width="5.800" height=".8"/></g></svg>
<div class="t " style="top:202.60px;right:209.20px;color:#333">Ja</div>
<div class="t " style="top:202.60px;right:154.50px;">0</div>
<div class="inp" style="left:874.700px;top:201.30px;width:44.600px;height:12.500px"></div>
<div class="t " style="top:202.90px;right:107.20px;">10</div>
<div class="sb" style="left:922px;top:202.50px;width:9.300px;height:10.300px"></div>
<svg style="left:923.80px;top:204.40px" width="6" height="6.6" viewBox="0 0 6 6.6"><path d="M.5 0v6.600" stroke="#333" stroke-width=".8"/><path d="M1 .6h4.800v3.200H1z" fill="#d8d8d8" stroke="#555" stroke-width=".4"/><path d="M1 .6h1.600v1.600H1zM4.200.6h1.600v1.600H4.200zM2.600 2.200h1.600v1.600H2.600z" fill="#444"/></svg>
<div class="cb" style="left:956.300px;top:203.70px"></div>
<div class="sb" style="left:989.200px;top:202.50px;width:9.300px;height:10.300px"></div>
<svg style="left:991.30px;top:205.30px" width="5" height="5" viewBox="0 0 5 5"><path d="M.5.500l4 4M4.500.5l-4 4" stroke="#111" stroke-width="1.250"/></svg>
<div class="cb" style="left:219.300px;top:228.80px"></div>
<div class="sb" style="left:239.50px;top:227.50px;width:8.6px;height:10px;border-color:#cfcfcf"><div style="position:absolute;left:0;width:100%;top:0;height:100%;text-align:center;font-weight:bold;font-size:8px;line-height:7.8px;color:#000">!</div></div>
<div class="t " style="top:227.50px;left:249.50px;">PA000002</div>
<div class="sb" style="left:298.20px;top:227.50px;width:8.6px;height:10px;border-color:#cfcfcf"><div style="position:absolute;left:0;width:100%;top:0;height:100%;text-align:center;font-weight:bold;font-size:8px;line-height:7.8px;color:#000">!</div></div>
<div class="t " style="top:227.50px;left:310.50px;">Bunter Hammer</div>
<div class="sb" style="left:398.00px;top:227.50px;width:8.6px;height:10px;border-color:#cfcfcf"><div style="position:absolute;left:0;width:100%;top:0;height:100%;text-align:center;font-weight:bold;font-size:8px;line-height:7.8px;color:#000">!</div></div>
<div class="t " style="top:227.50px;right:563.00px;">1</div>
<div class="t " style="top:227.50px;right:508.20px;">0</div>
<div class="inp" style="left:521.5px;top:226.20px;width:50.600px;height:12.500px"></div>
<div class="t " style="top:227.80px;right:454.50px;">1</div>
<div class="sb" style="left:575px;top:227.40px;width:8.600px;height:10.300px"></div>
<svg style="left:576.60px;top:229.50px" width="6" height="6" viewBox="0 0 6 6"><path d="M.4.600h4.800v4.800" fill="none" stroke="#444" stroke-width=".7"/><path d="M.6 3.200h2.200V1.800L5 3.700 2.800 5.600V4.300H.6z" fill="#444"/></svg>
<div class="t " style="top:227.50px;right:386.50px;">0</div>
<div class="inp" style="left:643.5px;top:226.20px;width:44.400px;height:12.500px"></div>
<div class="t " style="top:227.80px;right:339.00px;">1</div>
<div class="sb" style="left:690.700px;top:227.20px;width:9.300px;height:10.700px"></div>
<svg style="left:692.50px;top:229.70px" width="5.8" height="5.4" viewBox="0 0 5.8 5.4"><path d="M.5 2.800l1.800 1.900L5.300.5" fill="none" stroke="#111" stroke-width="1.300"/></svg>
<div class="inp" style="left:704.200px;top:226.20px;width:44.600px;height:12.500px"></div>
<div class="t " style="top:227.80px;right:277.70px;">0</div>
<div class="sb" style="left:751.500px;top:227.20px;width:9.300px;height:10.700px"></div>
<svg style="left:753.20px;top:229.90px" width="5.8" height="5.6" viewBox="0 0 5.8 5.6"><g fill="#555"><rect x="1.700" y="0" width="2.400" height="3"/><rect x=".2" y="2.600" width="5.400" height="1.700"/><rect x="0" y="4.800" width="5.800" height=".8"/></g></svg>
<div class="t " style="top:227.50px;right:209.20px;color:#333">Nein</div>
<div class="t " style="top:227.50px;right:154.50px;">0</div>
<div class="inp" style="left:874.700px;top:226.20px;width:44.600px;height:12.500px"></div>
<div class="t " style="top:227.80px;right:107.20px;">1</div>
<div class="sb" style="left:922px;top:227.40px;width:9.300px;height:10.300px"></div>
<svg style="left:923.80px;top:229.30px" width="6" height="6.6" viewBox="0 0 6 6.6"><path d="M.5 0v6.600" stroke="#333" stroke-width=".8"/><path d="M1 .6h4.800v3.200H1z" fill="#d8d8d8" stroke="#555" stroke-width=".4"/><path d="M1 .6h1.600v1.600H1zM4.200.6h1.600v1.600H4.200zM2.600 2.200h1.600v1.600H2.600z" fill="#444"/></svg>
<div class="cb" style="left:956.300px;top:228.60px"></div>
<div class="sb" style="left:989.200px;top:227.40px;width:9.300px;height:10.300px"></div>
<svg style="left:991.30px;top:230.20px" width="5" height="5" viewBox="0 0 5 5"><path d="M.5.500l4 4M4.500.5l-4 4" stroke="#111" stroke-width="1.250"/></svg>
<div class="cb" style="left:219.300px;top:253.70px"></div>
<div class="sb" style="left:239.50px;top:252.40px;width:8.6px;height:10px;border-color:#cfcfcf"><div style="position:absolute;left:0;width:100%;top:0;height:100%;text-align:center;font-weight:bold;font-size:8px;line-height:7.8px;color:#000"></div></div>
<div class="t " style="top:252.40px;left:249.50px;"></div>
<div class="sb" style="left:298.20px;top:252.40px;width:8.6px;height:10px;border-color:#cfcfcf"><div style="position:absolute;left:0;width:100%;top:0;height:100%;text-align:center;font-weight:bold;font-size:8px;line-height:7.8px;color:#000"></div></div>
<div class="t " style="top:252.40px;left:310.50px;"></div>
<div class="sb" style="left:398.00px;top:252.40px;width:8.6px;height:10px;border-color:#cfcfcf"><div style="position:absolute;left:0;width:100%;top:0;height:100%;text-align:center;font-weight:bold;font-size:8px;line-height:7.8px;color:#000"></div></div>
<div class="t " style="top:252.40px;right:563.00px;"></div>
<div class="t " style="top:252.40px;right:508.20px;"></div>
<div class="inp" style="left:521.5px;top:251.10px;width:50.600px;height:12.500px"></div>
<div class="t " style="top:252.70px;right:454.50px;"></div>
<div class="sb" style="left:575px;top:252.30px;width:8.600px;height:10.300px"></div>
<svg style="left:576.60px;top:254.40px" width="6" height="6" viewBox="0 0 6 6"><path d="M.4.600h4.800v4.800" fill="none" stroke="#444" stroke-width=".7"/><path d="M.6 3.200h2.200V1.800L5 3.700 2.800 5.600V4.300H.6z" fill="#444"/></svg>
<div class="t " style="top:252.40px;right:386.50px;"></div>
<div class="inp" style="left:643.5px;top:251.10px;width:44.400px;height:12.500px"></div>
<div class="t " style="top:252.70px;right:339.00px;"></div>
<div class="sb" style="left:690.700px;top:252.10px;width:9.300px;height:10.700px"></div>
<svg style="left:692.50px;top:254.60px" width="5.8" height="5.4" viewBox="0 0 5.8 5.4"><path d="M.5 2.800l1.800 1.900L5.300.5" fill="none" stroke="#111" stroke-width="1.300"/></svg>
<div class="inp" style="left:704.200px;top:251.10px;width:44.600px;height:12.500px"></div>
<div class="t " style="top:252.70px;right:277.70px;"></div>
<div class="sb" style="left:751.500px;top:252.10px;width:9.300px;height:10.700px"></div>
<svg style="left:753.20px;top:254.80px" width="5.8" height="5.6" viewBox="0 0 5.8 5.6"><g fill="#555"><rect x="1.700" y="0" width="2.400" height="3"/><rect x=".2" y="2.600" width="5.400" height="1.700"/><rect x="0" y="4.800" width="5.800" height=".8"/></g></svg>
<div class="t " style="top:252.40px;right:209.20px;color:#333"></div>
<div class="t " style="top:252.40px;right:154.50px;"></div>
<div class="inp" style="left:874.700px;top:251.10px;width:44.600px;height:12.500px"></div>
<div class="t " style="top:252.70px;right:107.20px;"></div>
<div class="sb" style="left:922px;top:252.30px;width:9.300px;height:10.300px"></div>
<svg style="left:923.80px;top:254.20px" width="6" height="6.6" viewBox="0 0 6 6.6"><path d="M.5 0v6.600" stroke="#333" stroke-width=".8"/><path d="M1 .6h4.800v3.200H1z" fill="#d8d8d8" stroke="#555" stroke-width=".4"/><path d="M1 .6h1.600v1.600H1zM4.200.6h1.600v1.600H4.200zM2.600 2.200h1.600v1.600H2.600z" fill="#444"/></svg>
<div class="cb" style="left:956.300px;top:253.50px"></div>
<div class="sb" style="left:989.200px;top:252.30px;width:9.300px;height:10.300px"></div>
<svg style="left:991.30px;top:255.10px" width="5" height="5" viewBox="0 0 5 5"><path d="M.5.500l4 4M4.500.5l-4 4" stroke="#111" stroke-width="1.250"/></svg>
</div></div>
<div class="b" style="left:1000.200px;top:195.200px;width:6.600px;height:34.400px;background:#f0f0f0;border:1px solid #e0e0e0;border-radius:3.300px"></div>
<svg style="left:218.20px;top:258.30px" width="4.8" height="4.8" viewBox="0 0 4.8 4.8"><path d="M3.600.8A2 2 0 1 0 4.400 2.400" fill="none" stroke="#666" stroke-width=".7"/><path d="M2.800 0l1.600.9-1.400.9z" fill="#666"/></svg>
<svg style="left:229.00px;top:258.30px" width="5.6" height="4.8" viewBox="0 0 5.6 4.8"><g fill="#666"><rect x="1.200" y="0" width="3.200" height="1.600"/><rect x="0" y="1.400" width="5.600" height="2.400" rx=".5"/><rect x="1.200" y="3" width="3.200" height="1.800" stroke="#fff" stroke-width=".3"/></g></svg>
<svg style="left:240.40px;top:258.00px" width="6.4" height="4.6" viewBox="0 0 6.4 4.6"><circle cx="1.300" cy="3.100" r="1.200" fill="#666"/><circle cx="4.500" cy="2.200" r="1.900" fill="#666"/><circle cx="4.900" cy="1.700" r=".7" fill="#aaa"/></svg>
<div class="t it" style="top:255.70px;left:263.00px;">Datensätze 1 - 4 von 4</div>
<svg style="left:947.60px;top:258.40px" width="6" height="4.6" viewBox="0 0 6 4.6"><rect x="0" y="0" width="1" height="4.600" fill="#a3a3a3"/><path d="M5.400 0v4.600L1.600 2.300z" fill="#a3a3a3"/></svg>
<svg style="left:960.60px;top:258.70px" width="3" height="4" viewBox="0 0 3 4"><path d="M3 0v4L0 2z" fill="#dcdcdc"/></svg>
<div class="t " style="top:256.10px;left:970.60px;color:#a3a3a3;font-size:6.5px">...</div>
<svg style="left:983.20px;top:258.70px" width="3" height="4" viewBox="0 0 3 4"><path d="M0 0v4L3 2z" fill="#dcdcdc"/></svg>
<svg style="left:991.40px;top:258.40px" width="6" height="4.6" viewBox="0 0 6 4.6"><rect x="5" y="0" width="1" height="4.600" fill="#a3a3a3"/><path d="M.6 0v4.600L4.400 2.300z" fill="#a3a3a3"/></svg>
<svg style="left:220.10px;top:569.50px" width="4.8" height="4.8" viewBox="0 0 4.8 4.8"><path d="M3.600.8A2 2 0 1 0 4.400 2.400" fill="none" stroke="#666" stroke-width=".7"/><path d="M2.800 0l1.600.9-1.400.9z" fill="#666"/></svg>
<svg style="left:230.90px;top:569.50px" width="5.6" height="4.8" viewBox="0 0 5.6 4.8"><g fill="#666"><rect x="1.200" y="0" width="3.200" height="1.600"/><rect x="0" y="1.400" width="5.600" height="2.400" rx=".5"/><rect x="1.200" y="3" width="3.200" height="1.800" stroke="#fff" stroke-width=".3"/></g></svg>
<svg style="left:242.30px;top:569.20px" width="6.4" height="4.6" viewBox="0 0 6.4 4.6"><circle cx="1.300" cy="3.100" r="1.200" fill="#666"/><circle cx="4.500" cy="2.200" r="1.900" fill="#666"/><circle cx="4.900" cy="1.700" r=".7" fill="#aaa"/></svg>
<div class="t it" style="top:566.90px;left:264.90px;">Datensätze 1 - 8 von 8</div>
<svg style="left:945.90px;top:569.60px" width="6" height="4.6" viewBox="0 0 6 4.6"><rect x="0" y="0" width="1" height="4.600" fill="#a3a3a3"/><path d="M5.400 0v4.600L1.600 2.300z" fill="#a3a3a3"/></svg>
<svg style="left:958.90px;top:569.90px" width="3" height="4" viewBox="0 0 3 4"><path d="M3 0v4L0 2z" fill="#dcdcdc"/></svg>
<div class="t " style="top:567.30px;left:968.90px;color:#a3a3a3;font-size:6.5px">...</div>
<svg style="left:981.50px;top:569.90px" width="3" height="4" viewBox="0 0 3 4"><path d="M0 0v4L3 2z" fill="#dcdcdc"/></svg>
<svg style="left:989.70px;top:569.60px" width="6" height="4.6" viewBox="0 0 6 4.6"><rect x="5" y="0" width="1" height="4.600" fill="#a3a3a3"/><path d="M.6 0v4.600L4.400 2.300z" fill="#a3a3a3"/></svg>
<div class="tb2" style="left:217.5px;width:50px;background:#0e9ce1;color:#fff">Positionen</div>
<div class="tb2" style="left:269.5px;width:44.5px">Allgemein</div>
<div class="tb2" style="left:317.5px;width:55.5px">Kennzeichen</div>
<div class="tb2" style="left:375.8px;width:50px">Dokumente</div>
<div class="tb2" style="left:428.8px;width:62px">Buchungsarten</div>
<div class="tb2" style="left:494px;width:41px">Protokoll</div>
<div class="b" style="left:217.500px;top:296.500px;width:787.800px;height:19.300px;background:#e9e9e9"></div>
<div class="t h" style="top:302.00px;left:232.00px;">Position</div>
<div class="t h" style="top:302.00px;left:280.80px;">Bezeichnung</div>
<svg style="left:326.50px;top:304.40px" width="5.6" height="5.4" viewBox="0 0 5.6 5.4"><path d="M.3.400h5L3.300 2.800V5L2.300 4.400V2.800z" fill="none" stroke="#888" stroke-width=".55"/></svg>
<div class="t h" style="top:302.00px;left:551.80px;">Artikelnr.</div>
<svg style="left:584.60px;top:304.40px" width="5.6" height="5.4" viewBox="0 0 5.6 5.4"><path d="M.3.400h5L3.300 2.800V5L2.300 4.400V2.800z" fill="none" stroke="#888" stroke-width=".55"/></svg>
<div class="t h" style="top:302.00px;left:606.80px;">Unterauftrag</div>
<div class="t h" style="top:302.00px;left:676.80px;">Menge</div>
<div class="t h" style="top:302.00px;left:705.00px;">ME</div>
<div class="t h" style="top:302.00px;left:771.80px;">Erstellt</div>
<svg style="left:797.20px;top:302.90px" width="4.8" height="6.8" viewBox="0 0 4.8 6.8"><path d="M4.700 2.300H2.300V.9L.4 3.400l1.900 2.500V4.500h2.400" fill="#f6f6f6" stroke="#a2a2a2" stroke-width=".6"/></svg>
<div class="t h" style="top:302.00px;left:808.50px;">Eingeplant</div>
<svg style="left:845.70px;top:302.90px" width="4.8" height="6.8" viewBox="0 0 4.8 6.8"><path d="M4.700 2.300H2.300V.9L.4 3.400l1.900 2.500V4.500h2.400" fill="#f6f6f6" stroke="#a2a2a2" stroke-width=".6"/></svg>
<div class="t h" style="top:302.00px;left:856.80px;">Freigegeben</div>
<div class="t h" style="top:302.00px;left:907.80px;">Gemeldet</div>
<svg style="left:942.00px;top:302.90px" width="4.8" height="6.8" viewBox="0 0 4.8 6.8"><path d="M4.700 2.300H2.300V.9L.4 3.400l1.900 2.500V4.500h2.400" fill="#f6f6f6" stroke="#a2a2a2" stroke-width=".6"/></svg>
<div class="t h" style="top:302.00px;left:969.30px;">Fertig</div>
<svg style="left:990.00px;top:302.90px" width="4.8" height="6.8" viewBox="0 0 4.8 6.8"><path d="M4.700 2.300H2.300V.9L.4 3.400l1.900 2.500V4.500h2.400" fill="#f6f6f6" stroke="#a2a2a2" stroke-width=".6"/></svg>
<svg style="left:998.80px;top:303.80px" width="6.2" height="6" viewBox="0 0 6.2 6"><rect x=".2" y="0" width="5.800" height="4" fill="#dfe3e6"/><path d="M2.300.3h1.600v1.800h1.100L3.100 4 1.200 2.100h1.100z" fill="#1f8fd8"/><rect x="0" y="4.300" width="6.200" height="1.500" fill="#2b2b2b"/></svg>
<div class="t " style="top:320.70px;left:232.00px;">(Alle)</div>
<div class="b" style="left:217.500px;top:334.40px;width:780.300px;height:20.68px;background:#f4f4f4"></div>
<div class="b" style="left:219.200px;top:340.54px;width:9.800px;height:9.200px;background:#fff"></div>
<svg style="left:219.50px;top:340.54px" width="9.4" height="9" viewBox="0 0 9.4 9"><path d="M.5 4.700q0-.5.500-.5h5.400q.5 0 .5.500v3.200q0 .5-.5.500H1q-.5 0-.5-.5z" fill="none" stroke="#333" stroke-width=".8"/><path d="M2 4.200v-.9h2.400" fill="none" stroke="#333" stroke-width=".7"/><path d="M2.800.6L8.600 6.200M8.800.5L3.200 6.200" stroke="#1c96e0" stroke-width="1.400" stroke-linecap="round"/><path d="M2.300.4l1.400 1.200M7.800.3l1.400.9" stroke="#1c96e0" stroke-width="1.100"/></svg>
<div class="t " style="top:340.14px;left:232.00px;">1</div>
<div class="t " style="top:340.14px;left:280.80px;">.Armband montieren und Uhr verpacken - Armbanduhr</div>
<div class="sb" style="left:591.40px;top:340.14px;width:8.5px;height:9.8px;border-color:#cfcfcf"><div style="position:absolute;left:0;width:100%;top:0;height:100%;text-align:center;font-weight:bold;font-size:8px;line-height:7.6000000000000005px;color:#000">!</div></div>
<div class="t " style="top:340.14px;right:327.00px;">10</div>
<div class="t " style="top:340.14px;left:701.30px;">Stk</div>
<div class="sb" style="left:737.300px;top:339.94px;width:5.200px;height:10.600px;border-color:#c6c6c6;border-right:none;border-radius:2.500px 0 0 2.500px"></div>
<svg style="left:738.80px;top:343.54px" width="3.4" height="4" viewBox="0 0 3.4 4"><path d="M2.900 0L.8 2.700 1.800 3.400 3.400.6z" fill="#d0a000"/><path d="M.8 2.700L.3 3.900 1.800 3.400z" fill="#8a6a00"/></svg>
<div class="sb" style="left:743.500px;top:339.94px;width:9.100px;height:10.600px;border-color:#c6c6c6;border-radius:2.500px"></div>
<div class="t " style="top:340.84px;left:648.10px;width:200px;text-align:center;font-size:5px;color:#333">...</div>
<div class="t " style="top:340.14px;right:223.00px;">10</div>
<div class="t " style="top:340.14px;right:174.20px;">10</div>
<div class="t " style="top:340.14px;right:126.00px;">7</div>
<div class="t " style="top:340.14px;right:76.70px;">0</div>
<div class="b" style="left:219.200px;top:361.22px;width:9.800px;height:9.200px;background:#fff"></div>
<svg style="left:219.50px;top:361.52px" width="9.4" height="8.8" viewBox="0 0 9.4 8.8"><path d="M.5.800h4.700v4.600H.5z" fill="#fff" stroke="#333" stroke-width=".8"/><path d="M3.500 1.700q0-.5.500-.5h4.800q.5 0 .5.500v2.300q0 .5-.5.500H7.800l-.3 3.600q0 .5-.5.500h-.9q-.5 0-.5-.5L5.300 4.500H4q-.5 0-.5-.5z" fill="#1c96e0"/></svg>
<div class="t " style="top:360.82px;left:232.00px;">1.1</div>
<div class="t " style="top:360.82px;left:280.80px;">..Uhrenarmband</div>
<div class="t " style="top:360.82px;left:548.80px;">A000074</div>
<div class="sb" style="left:591.40px;top:360.82px;width:8.5px;height:9.8px;border-color:#cfcfcf"><div style="position:absolute;left:0;width:100%;top:0;height:100%;text-align:center;font-weight:bold;font-size:8px;line-height:7.6000000000000005px;color:#000">!</div></div>
<div class="t " style="top:360.82px;right:327.00px;">10</div>
<div class="t " style="top:360.82px;left:701.30px;">Stk</div>
<div class="sb" style="left:737.300px;top:360.62px;width:5.200px;height:10.600px;border-color:#c6c6c6;border-right:none;border-radius:2.500px 0 0 2.500px"></div>
<svg style="left:738.80px;top:364.22px" width="3.4" height="4" viewBox="0 0 3.4 4"><path d="M2.900 0L.8 2.700 1.800 3.400 3.400.6z" fill="#d0a000"/><path d="M.8 2.700L.3 3.900 1.800 3.400z" fill="#8a6a00"/></svg>
<div class="sb" style="left:743.500px;top:360.62px;width:9.100px;height:10.600px;border-color:#c6c6c6;border-radius:2.500px"></div>
<div class="t " style="top:361.52px;left:648.10px;width:200px;text-align:center;font-size:5px;color:#333">...</div>
<div class="t " style="top:360.82px;right:223.00px;">10</div>
<div class="t " style="top:360.82px;right:174.20px;">10</div>
<div class="t " style="top:360.82px;right:126.00px;">7</div>
<div class="t " style="top:360.82px;right:76.70px;">0</div>
<div class="b" style="left:217.500px;top:375.76px;width:780.300px;height:20.68px;background:#c4d9f8"></div>
<div class="b" style="left:219.200px;top:381.90px;width:9.800px;height:9.200px;background:#fff"></div>
<svg style="left:219.50px;top:382.20px" width="9.4" height="8.8" viewBox="0 0 9.4 8.8"><path d="M.5.800h4.700v4.600H.5z" fill="#fff" stroke="#333" stroke-width=".8"/><path d="M3.500 1.700q0-.5.500-.5h4.800q.5 0 .5.500v2.300q0 .5-.5.500H7.800l-.3 3.600q0 .5-.5.500h-.9q-.5 0-.5-.5L5.300 4.500H4q-.5 0-.5-.5z" fill="#1c96e0"/></svg>
<div class="t " style="top:381.50px;left:232.00px;">1.2</div>
<div class="t " style="top:381.50px;left:280.80px;">..Uhrenschatulle</div>
<div class="t " style="top:381.50px;left:548.80px;">A000075</div>
<div class="sb" style="left:591.40px;top:381.50px;width:8.5px;height:9.8px;border-color:#cfcfcf"><div style="position:absolute;left:0;width:100%;top:0;height:100%;text-align:center;font-weight:bold;font-size:8px;line-height:7.6000000000000005px;color:#000">!</div></div>
<div class="t " style="top:381.50px;right:327.00px;">10</div>
<div class="t " style="top:381.50px;left:701.30px;">Stk</div>
<div class="sb" style="left:737.300px;top:381.30px;width:5.200px;height:10.600px;border-color:#c6c6c6;border-right:none;border-radius:2.500px 0 0 2.500px"></div>
<svg style="left:738.80px;top:384.90px" width="3.4" height="4" viewBox="0 0 3.4 4"><path d="M2.900 0L.8 2.700 1.800 3.400 3.400.6z" fill="#d0a000"/><path d="M.8 2.700L.3 3.900 1.800 3.400z" fill="#8a6a00"/></svg>
<div class="sb" style="left:743.500px;top:381.30px;width:9.100px;height:10.600px;border-color:#c6c6c6;border-radius:2.500px"></div>
<div class="t " style="top:382.20px;left:648.10px;width:200px;text-align:center;font-size:5px;color:#333">...</div>
<div class="t " style="top:381.50px;right:223.00px;">10</div>
<div class="t " style="top:381.50px;right:174.20px;">10</div>
<div class="t " style="top:381.50px;right:126.00px;">7</div>
<div class="t " style="top:381.50px;right:76.70px;">0</div>
<div class="b" style="left:219.200px;top:402.58px;width:9.800px;height:9.200px;background:#fff"></div>
<svg style="left:219.50px;top:402.88px" width="9.4" height="8.6" viewBox="0 0 9.4 8.6"><g fill="none" stroke="#444" stroke-width=".75"><path d="M.5 4.400l2.500-1.200 2 1.600 3.600-.2.300 1.200v2.100H.5z"/><path d="M3 3.200L4.300.8 7 .5 8.400 3v1.600"/><path d="M.5 4.400l4.500.4V7.900"/><path d="M4.400.8l.8 3.800"/></g></svg>
<div class="t " style="top:402.18px;left:232.00px;">1.3</div>
<div class="t " style="top:402.18px;left:280.80px;">..Uhrengehäuse</div>
<div class="t " style="top:402.18px;left:548.80px;">A000076</div>
<div class="sb" style="left:591.40px;top:402.18px;width:8.5px;height:9.8px;border-color:#cfcfcf"><div style="position:absolute;left:0;width:100%;top:0;height:100%;text-align:center;font-weight:bold;font-size:8px;line-height:7.6000000000000005px;color:#000">!</div></div>
<div class="t " style="top:402.18px;right:327.00px;">10</div>
<div class="t " style="top:402.18px;left:701.30px;">Stk</div>
<div class="sb" style="left:737.300px;top:401.98px;width:5.200px;height:10.600px;border-color:#c6c6c6;border-right:none;border-radius:2.500px 0 0 2.500px"></div>
<svg style="left:738.80px;top:405.58px" width="3.4" height="4" viewBox="0 0 3.4 4"><path d="M2.900 0L.8 2.700 1.800 3.400 3.400.6z" fill="#d0a000"/><path d="M.8 2.700L.3 3.900 1.800 3.400z" fill="#8a6a00"/></svg>
<div class="sb" style="left:743.500px;top:401.98px;width:9.100px;height:10.600px;border-color:#c6c6c6;border-radius:2.500px"></div>
<div class="t " style="top:402.88px;left:648.10px;width:200px;text-align:center;font-size:5px;color:#333">...</div>
<div class="t " style="top:402.18px;right:223.00px;">10</div>
<div class="t " style="top:402.18px;right:174.20px;">10</div>
<div class="t " style="top:402.18px;right:126.00px;">7</div>
<div class="t " style="top:402.18px;right:76.70px;">0</div>
<div class="b" style="left:217.500px;top:417.12px;width:780.300px;height:20.68px;background:#f4f4f4"></div>
<div class="b" style="left:219.200px;top:423.26px;width:9.800px;height:9.200px;background:#fff"></div>
<svg style="left:219.50px;top:423.26px" width="9.4" height="9" viewBox="0 0 9.4 9"><path d="M.5 4.700q0-.5.500-.5h5.400q.5 0 .5.500v3.200q0 .5-.5.500H1q-.5 0-.5-.5z" fill="none" stroke="#333" stroke-width=".8"/><path d="M2 4.200v-.9h2.400" fill="none" stroke="#333" stroke-width=".7"/><path d="M2.800.6L8.600 6.200M8.800.5L3.200 6.200" stroke="#1c96e0" stroke-width="1.400" stroke-linecap="round"/><path d="M2.300.4l1.400 1.200M7.800.3l1.400.9" stroke="#1c96e0" stroke-width="1.100"/></svg>
<div class="t " style="top:422.86px;left:232.00px;">1.3.1</div>
<div class="t " style="top:422.86px;left:280.80px;">...Uhr montieren - Uhrengehäuse</div>
<div class="sb" style="left:591.40px;top:422.86px;width:8.5px;height:9.8px;border-color:#cfcfcf"><div style="position:absolute;left:0;width:100%;top:0;height:100%;text-align:center;font-weight:bold;font-size:8px;line-height:7.6000000000000005px;color:#000">!</div></div>
<div class="t " style="top:422.86px;right:327.00px;">10</div>
<div class="t " style="top:422.86px;left:701.30px;">Stk</div>
<div class="sb" style="left:737.300px;top:422.66px;width:5.200px;height:10.600px;border-color:#c6c6c6;border-right:none;border-radius:2.500px 0 0 2.500px"></div>
<svg style="left:738.80px;top:426.26px" width="3.4" height="4" viewBox="0 0 3.4 4"><path d="M2.900 0L.8 2.700 1.800 3.400 3.400.6z" fill="#d0a000"/><path d="M.8 2.700L.3 3.900 1.800 3.400z" fill="#8a6a00"/></svg>
<div class="sb" style="left:743.500px;top:422.66px;width:9.100px;height:10.600px;border-color:#c6c6c6;border-radius:2.500px"></div>
<div class="t " style="top:423.56px;left:648.10px;width:200px;text-align:center;font-size:5px;color:#333">...</div>
<div class="t " style="top:422.86px;right:223.00px;">10</div>
<div class="t " style="top:422.86px;right:174.20px;">10</div>
<div class="t " style="top:422.86px;right:126.00px;">7</div>
<div class="t " style="top:422.86px;right:76.70px;">4</div>
<div class="b" style="left:219.200px;top:443.94px;width:9.800px;height:9.200px;background:#fff"></div>
<svg style="left:219.50px;top:444.24px" width="9.4" height="8.8" viewBox="0 0 9.4 8.8"><path d="M.5.800h4.700v4.600H.5z" fill="#fff" stroke="#333" stroke-width=".8"/><path d="M3.500 1.700q0-.5.500-.5h4.800q.5 0 .5.500v2.300q0 .5-.5.500H7.800l-.3 3.600q0 .5-.5.500h-.9q-.5 0-.5-.5L5.300 4.500H4q-.5 0-.5-.5z" fill="#1c96e0"/></svg>
<div class="t " style="top:443.54px;left:232.00px;">1.3.1.1</div>
<div class="t " style="top:443.54px;left:280.80px;">....Uhrwerk</div>
<div class="t " style="top:443.54px;left:548.80px;">A000077</div>
<div class="sb" style="left:591.40px;top:443.54px;width:8.5px;height:9.8px;border-color:#cfcfcf"><div style="position:absolute;left:0;width:100%;top:0;height:100%;text-align:center;font-weight:bold;font-size:8px;line-height:7.6000000000000005px;color:#000">!</div></div>
<div class="t " style="top:443.54px;right:327.00px;">10</div>
<div class="t " style="top:443.54px;left:701.30px;">Stk</div>
<div class="sb" style="left:737.300px;top:443.34px;width:5.200px;height:10.600px;border-color:#c6c6c6;border-right:none;border-radius:2.500px 0 0 2.500px"></div>
<svg style="left:738.80px;top:446.94px" width="3.4" height="4" viewBox="0 0 3.4 4"><path d="M2.900 0L.8 2.700 1.800 3.400 3.400.6z" fill="#d0a000"/><path d="M.8 2.700L.3 3.900 1.800 3.400z" fill="#8a6a00"/></svg>
<div class="sb" style="left:743.500px;top:443.34px;width:9.100px;height:10.600px;border-color:#c6c6c6;border-radius:2.500px"></div>
<div class="t " style="top:444.24px;left:648.10px;width:200px;text-align:center;font-size:5px;color:#333">...</div>
<div class="t " style="top:443.54px;right:223.00px;">10</div>
<div class="t " style="top:443.54px;right:174.20px;">10</div>
<div class="t " style="top:443.54px;right:126.00px;">7</div>
<div class="t " style="top:443.54px;right:76.70px;">4</div>
<div class="b" style="left:217.500px;top:458.48px;width:780.300px;height:20.68px;background:#f4f4f4"></div>
<div class="b" style="left:219.200px;top:464.62px;width:9.800px;height:9.200px;background:#fff"></div>
<svg style="left:219.50px;top:464.92px" width="9.4" height="8.8" viewBox="0 0 9.4 8.8"><path d="M.5.800h4.700v4.600H.5z" fill="#fff" stroke="#333" stroke-width=".8"/><path d="M3.500 1.700q0-.5.500-.5h4.800q.5 0 .5.500v2.300q0 .5-.5.500H7.800l-.3 3.600q0 .5-.5.500h-.9q-.5 0-.5-.5L5.300 4.500H4q-.5 0-.5-.5z" fill="#1c96e0"/></svg>
<div class="t " style="top:464.22px;left:232.00px;">1.3.1.2</div>
<div class="t " style="top:464.22px;left:280.80px;">....Zifferblatt</div>
<div class="t " style="top:464.22px;left:548.80px;">A000078</div>
<div class="sb" style="left:591.40px;top:464.22px;width:8.5px;height:9.8px;border-color:#cfcfcf"><div style="position:absolute;left:0;width:100%;top:0;height:100%;text-align:center;font-weight:bold;font-size:8px;line-height:7.6000000000000005px;color:#000">!</div></div>
<div class="t " style="top:464.22px;right:327.00px;">10</div>
<div class="t " style="top:464.22px;left:701.30px;">Stk</div>
<div class="sb" style="left:737.300px;top:464.02px;width:5.200px;height:10.600px;border-color:#c6c6c6;border-right:none;border-radius:2.500px 0 0 2.500px"></div>
<svg style="left:738.80px;top:467.62px" width="3.4" height="4" viewBox="0 0 3.4 4"><path d="M2.900 0L.8 2.700 1.800 3.400 3.400.6z" fill="#d0a000"/><path d="M.8 2.700L.3 3.900 1.800 3.400z" fill="#8a6a00"/></svg>
<div class="sb" style="left:743.500px;top:464.02px;width:9.100px;height:10.600px;border-color:#c6c6c6;border-radius:2.500px"></div>
<div class="t " style="top:464.92px;left:648.10px;width:200px;text-align:center;font-size:5px;color:#333">...</div>
<div class="t " style="top:464.22px;right:223.00px;">10</div>
<div class="t " style="top:464.22px;right:174.20px;">10</div>
<div class="t " style="top:464.22px;right:126.00px;">7</div>
<div class="t " style="top:464.22px;right:76.70px;">4</div>
<div class="b" style="left:219.200px;top:485.30px;width:9.800px;height:9.200px;background:#fff"></div>
<svg style="left:219.50px;top:485.60px" width="9.4" height="8.8" viewBox="0 0 9.4 8.8"><path d="M.5.800h4.700v4.600H.5z" fill="#fff" stroke="#333" stroke-width=".8"/><path d="M3.500 1.700q0-.5.500-.5h4.800q.5 0 .5.500v2.300q0 .5-.5.500H7.800l-.3 3.600q0 .5-.5.500h-.9q-.5 0-.5-.5L5.300 4.500H4q-.5 0-.5-.5z" fill="#1c96e0"/></svg>
<div class="t " style="top:484.90px;left:232.00px;">1.3.1.3</div>
<div class="t " style="top:484.90px;left:280.80px;">....Zeiger</div>
<div class="t " style="top:484.90px;left:548.80px;">A000079</div>
<div class="sb" style="left:591.40px;top:484.90px;width:8.5px;height:9.8px;border-color:#cfcfcf"><div style="position:absolute;left:0;width:100%;top:0;height:100%;text-align:center;font-weight:bold;font-size:8px;line-height:7.6000000000000005px;color:#000">!</div></div>
<div class="t " style="top:484.90px;right:327.00px;">20</div>
<div class="t " style="top:484.90px;left:701.30px;">Stk</div>
<div class="sb" style="left:737.300px;top:484.70px;width:5.200px;height:10.600px;border-color:#c6c6c6;border-right:none;border-radius:2.500px 0 0 2.500px"></div>
<svg style="left:738.80px;top:488.30px" width="3.4" height="4" viewBox="0 0 3.4 4"><path d="M2.900 0L.8 2.700 1.800 3.400 3.400.6z" fill="#d0a000"/><path d="M.8 2.700L.3 3.900 1.800 3.400z" fill="#8a6a00"/></svg>
<div class="sb" style="left:743.500px;top:484.70px;width:9.100px;height:10.600px;border-color:#c6c6c6;border-radius:2.500px"></div>
<div class="t " style="top:485.60px;left:648.10px;width:200px;text-align:center;font-size:5px;color:#333">...</div>
<div class="t " style="top:484.90px;right:223.00px;">20</div>
<div class="t " style="top:484.90px;right:174.20px;">20</div>
<div class="t " style="top:484.90px;right:126.00px;">14</div>
<div class="t " style="top:484.90px;right:76.70px;">8</div>
</div>
</body></html>
